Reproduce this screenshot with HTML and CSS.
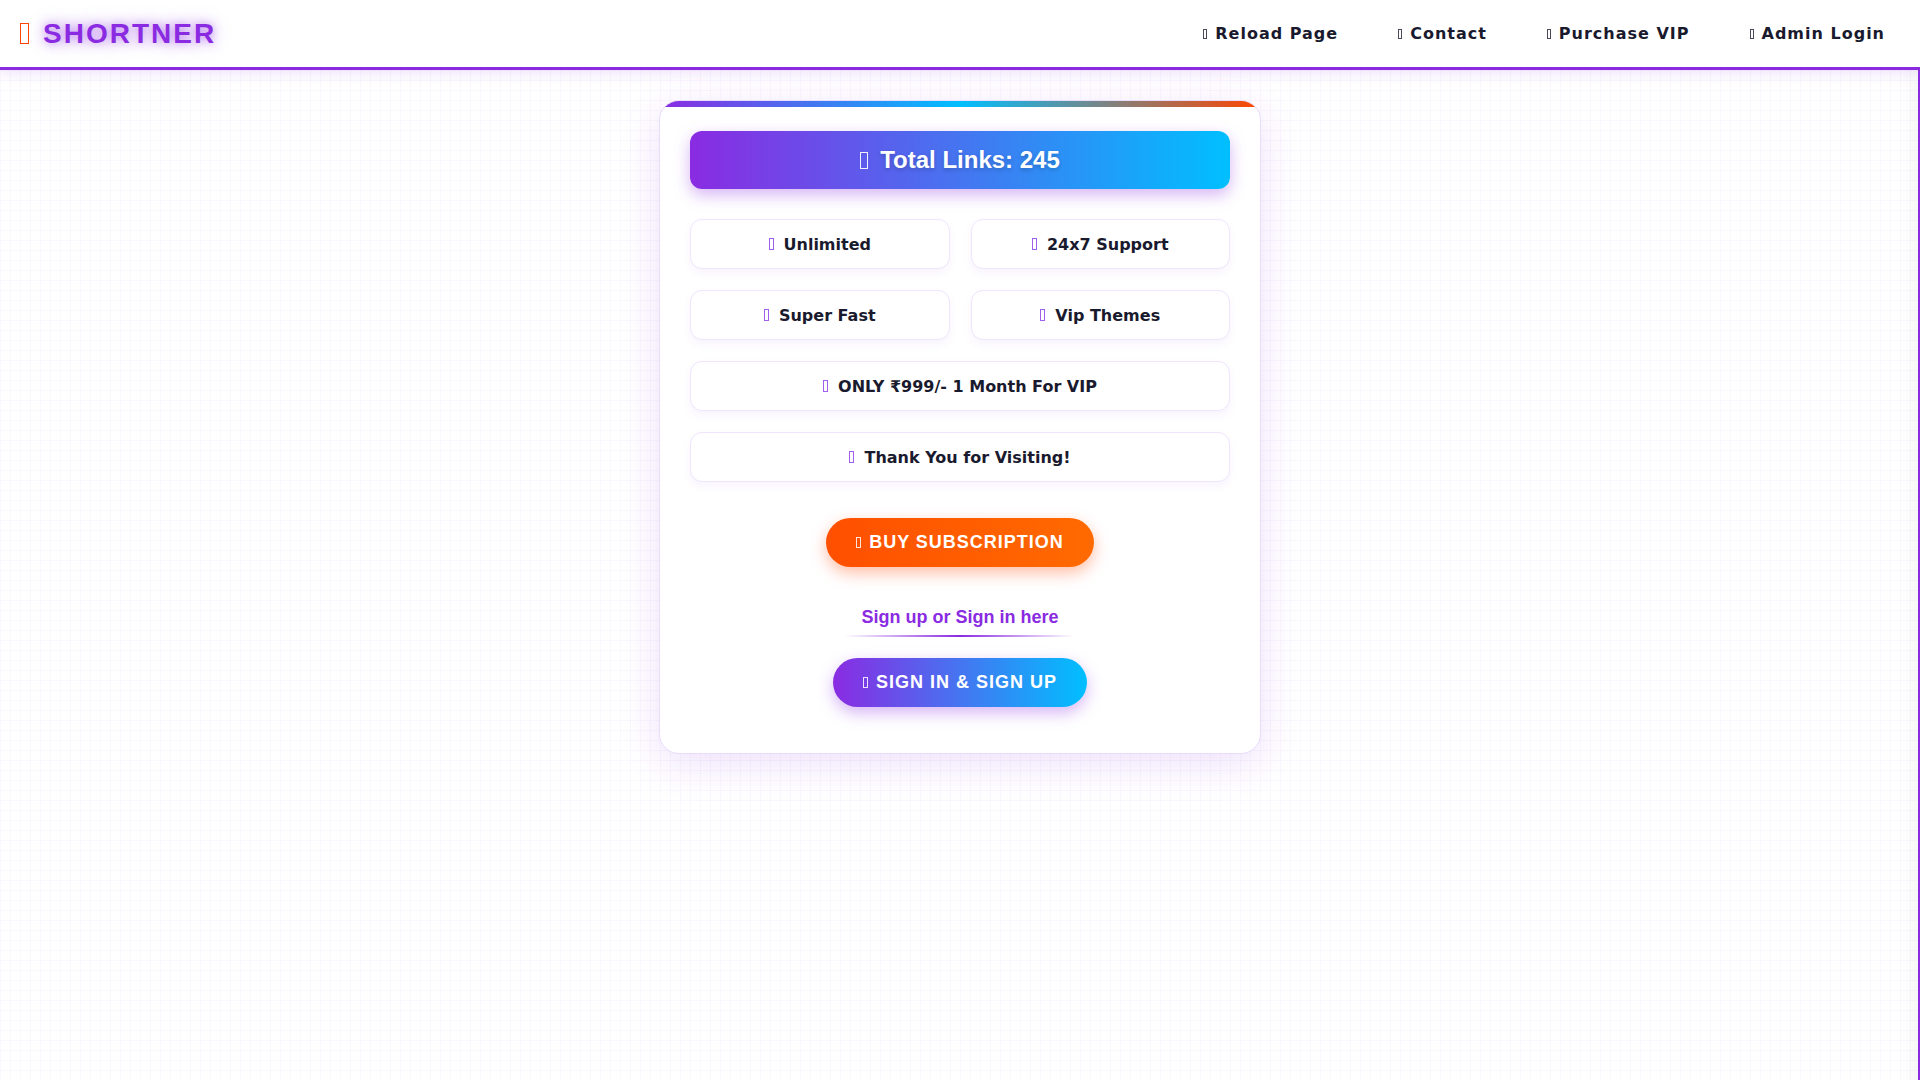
FILE: index.html
```html
<!DOCTYPE html>
<html lang="en">

<head>
    <meta charset="UTF-8">
    <meta name="viewport" content="width=device-width, initial-scale=1.0">
    <title>Shortner</title>
    <link rel="stylesheet" href="styles.css">
</head>

<body>
    <header class="topbar">
        <div class="logo"><span class="ico ico-logo"></span>SHORTNER</div>
        <nav class="nav">
            <a href="#"><span class="ico"></span>Reload Page</a>
            <a href="#"><span class="ico"></span>Contact</a>
            <a href="#"><span class="ico"></span>Purchase VIP</a>
            <a href="#"><span class="ico"></span>Admin Login</a>
        </nav>
    </header>

    <main class="page">
        <div class="card">
            <div class="stats"><span class="ico ico-stats"></span>Total Links: 245</div>

            <div class="features">
                <div class="feature"><span class="ico ico-feature"></span>Unlimited</div>
                <div class="feature"><span class="ico ico-feature"></span>24x7 Support</div>
                <div class="feature"><span class="ico ico-feature"></span>Super Fast</div>
                <div class="feature"><span class="ico ico-feature"></span>Vip Themes</div>
                <div class="feature wide"><span class="ico ico-feature"></span>ONLY ₹999/- 1 Month For VIP</div>
                <div class="feature wide"><span class="ico ico-feature"></span>Thank You for Visiting!</div>
            </div>

            <a href="#" class="btn btn-buy"><span class="ico ico-btn"></span>BUY SUBSCRIPTION</a>

            <div class="auth-title">Sign up or Sign in here</div>

            <a href="#" class="btn btn-auth"><span class="ico ico-btn"></span>SIGN IN &amp; SIGN UP</a>
        </div>
    </main>
</body>

</html>
```

FILE: styles.css
```css
html,
body {
    margin: 0;
    padding: 0;
    height: 100%;
}

body {
    font-family: "DejaVu Sans", sans-serif;
    color: #1a1a2e;
    background-color: #ffffff;
    background-image:
        linear-gradient(rgba(138, 43, 226, 0.035) 1px, transparent 1px),
        linear-gradient(90deg, rgba(138, 43, 226, 0.035) 1px, transparent 1px);
    background-size: 10px 10px;
}

/* missing icon glyph boxes */
.ico {
    display: inline-block;
    box-sizing: border-box;
    width: 4px;
    height: 10px;
    border: 1px solid currentColor;
    margin-right: 8px;
    vertical-align: 0;
}

/* header */
.topbar {
    height: 67px;
    display: flex;
    align-items: center;
    justify-content: space-between;
    padding: 0 35px 0 20px;
    background-color: #ffffff;
    border-bottom: 3px solid #8a2be2;
    box-shadow: 0 4px 12px rgba(138, 43, 226, 0.12);
    position: relative;
    z-index: 2;
}

.logo {
    font-family: "Liberation Sans", Arial, sans-serif;
    font-size: 28px;
    font-weight: bold;
    letter-spacing: 2px;
    color: #8a2be2;
    text-shadow: 0 0 10px rgba(138, 43, 226, 0.55), 0 0 20px rgba(138, 43, 226, 0.3);
    display: flex;
    align-items: center;
}

.ico-logo {
    width: 9px;
    height: 21px;
    color: #ff4500;
    margin-right: 14px;
    text-shadow: none;
}

.nav {
    display: flex;
    gap: 60px;
}

.nav a {
    font-size: 16px;
    font-weight: bold;
    letter-spacing: 1px;
    color: #1a1a2e;
    text-decoration: none;
}

.nav .ico {
    border-width: 1px;
    border-color: rgba(26, 26, 46, 0.8);
}

/* main area */
.page {
    min-height: calc(100vh - 70px);
    box-sizing: border-box;
    padding: 30px 0 0 2px;
    border-right: 2px solid #8a2be2;
    box-shadow: inset -22px 0 20px -18px rgba(0, 0, 0, 0.05);
}

.card {
    position: relative;
    overflow: hidden;
    width: 540px;
    margin: 0 auto;
    padding: 30px 30px 46px;
    background-color: #ffffff;
    border: 1px solid #eadcfb;
    border-radius: 20px;
    box-shadow: 0 10px 40px rgba(138, 43, 226, 0.14);
    text-align: center;
}

.card::before {
    content: "";
    position: absolute;
    top: 0;
    left: 0;
    right: 0;
    height: 6px;
    background: linear-gradient(90deg, #8a2be2, #00bfff, #ff4500);
}

.stats {
    height: 58px;
    display: flex;
    align-items: center;
    justify-content: center;
    border-radius: 12px;
    background: linear-gradient(90deg, #8a2be2, #00bfff);
    box-shadow: 0 6px 16px rgba(138, 43, 226, 0.35);
    color: #ffffff;
    font-family: "Liberation Sans", Arial, sans-serif;
    font-size: 24px;
    font-weight: bold;
    text-shadow: 0 2px 4px rgba(0, 0, 0, 0.2);
    margin-bottom: 30px;
}

.ico-stats {
    width: 8px;
    height: 17px;
    margin-right: 12px;
    border-color: rgba(255, 255, 255, 0.9);
}

.features {
    display: grid;
    grid-template-columns: 1fr 1fr;
    grid-auto-rows: 50px;
    gap: 21px;
}

.feature {
    display: flex;
    align-items: center;
    justify-content: center;
    background-color: #ffffff;
    border: 1px solid #efe5fc;
    border-radius: 12px;
    box-shadow: 0 4px 10px rgba(138, 43, 226, 0.06);
    font-size: 16px;
    font-weight: bold;
    color: #1a1a2e;
}

.feature.wide {
    grid-column: span 2;
}

.ico-feature {
    width: 5px;
    height: 12px;
    margin-right: 10px;
    color: #a060ec;
}

.btn {
    display: inline-block;
    padding: 15px 30px;
    border-radius: 50px;
    font-family: "Liberation Sans", Arial, sans-serif;
    font-size: 18px;
    line-height: 19px;
    font-weight: bold;
    letter-spacing: 1px;
    color: #ffffff;
    text-decoration: none;
}

.ico-btn {
    width: 5px;
    height: 11px;
    margin-right: 8px;
    border-color: rgba(255, 255, 255, 0.85);
}

.btn-buy {
    margin-top: 36px;
    background: linear-gradient(90deg, #ff4f00, #ff6a00);
    box-shadow: 0 6px 16px rgba(255, 69, 0, 0.35);
}

.auth-title {
    display: table;
    margin: 40px auto 21px;
    padding: 0 16px 9px;
    font-family: "Liberation Sans", Arial, sans-serif;
    font-size: 18px;
    font-weight: bold;
    color: #8a2be2;
    background: linear-gradient(90deg, transparent, #8a2be2, transparent) bottom / 100% 2px no-repeat;
}

.btn-auth {
    background: linear-gradient(90deg, #8a2be2, #00bfff);
    box-shadow: 0 6px 16px rgba(138, 43, 226, 0.35);
}
```
